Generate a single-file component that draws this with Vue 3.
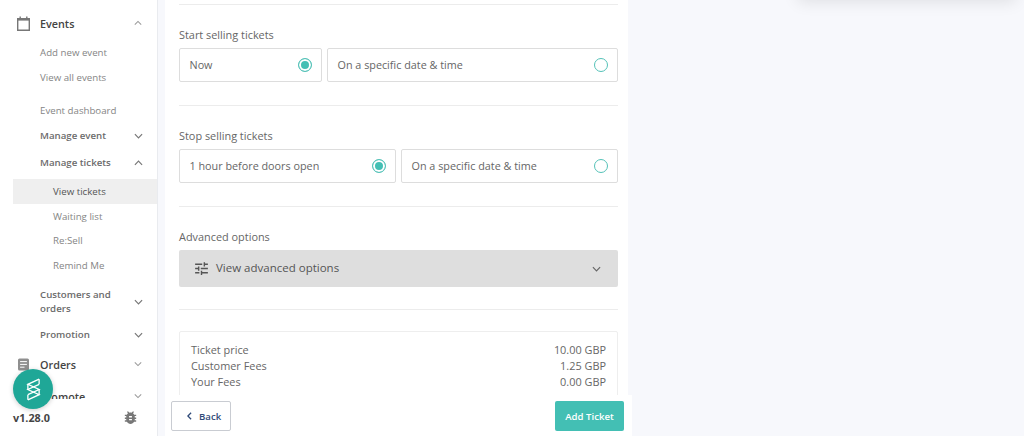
<script setup>
const subGroups = [
  { cls: 'r-sub', label: 'Add new event' },
  { cls: 'r-sub', label: 'View all events' },
  { cls: 'r-plain gap8', label: 'Event dashboard' }
]
const tickets = [
  { label: 'View tickets', active: true },
  { label: 'Waiting list' },
  { label: 'Re:Sell' },
  { label: 'Remind Me' }
]
const rows = [
  { label: 'Ticket price', value: '10.00 GBP' },
  { label: 'Customer Fees', value: '1.25 GBP' },
  { label: 'Your Fees', value: '0.00 GBP' }
]
</script>

<template>
  <div class="page">
    <aside class="sidebar">
      <nav class="nav">
        <div class="head events">
          <svg class="ico" viewBox="0 0 13 15" width="13" height="15"><path d="M0.7 2.7h11.6v11.6H0.7z" fill="none" stroke="#777" stroke-width="1.4"/><path d="M0.7 3.6h11.6" stroke="#777" stroke-width="2"/><path d="M3.2 0.5v2.4M9.8 0.5v2.4" stroke="#777" stroke-width="1.4"/></svg>
          <span class="grow">Events</span>
          <svg class="chev light" viewBox="0 0 10 6"><path d="M1 5l4-4 4 4" /></svg>
        </div>
        <div v-for="s in subGroups" :key="s.label" :class="s.cls">{{ s.label }}</div>
        <div class="group">
          <span class="grow">Manage event</span>
          <svg class="chev" viewBox="0 0 10 6"><path d="M1 1l4 4 4-4" /></svg>
        </div>
        <div class="group g2">
          <span class="grow">Manage tickets</span>
          <svg class="chev" viewBox="0 0 10 6"><path d="M1 5l4-4 4 4" /></svg>
        </div>
        <div class="tickets">
          <div v-for="t in tickets" :key="t.label" class="ticket" :class="{ active: t.active }">{{ t.label }}</div>
        </div>
        <div class="group two">
          <span class="grow">Customers and orders</span>
          <svg class="chev" viewBox="0 0 10 6"><path d="M1 1l4 4 4-4" /></svg>
        </div>
        <div class="group promo">
          <span class="grow">Promotion</span>
          <svg class="chev" viewBox="0 0 10 6"><path d="M1 1l4 4 4-4" /></svg>
        </div>
        <div class="head orders">
          <svg class="ico" viewBox="0 0 12 13" width="12" height="13"><rect x="0.5" y="0.5" width="11" height="12" rx="1.5" fill="#8f8f8f"/><path d="M2.6 3.6h6.8M2.6 6.4h6.8M2.6 9.2h4.4" stroke="#fff" stroke-width="1"/></svg>
          <span class="grow">Orders</span>
          <svg class="chev light" viewBox="0 0 10 6"><path d="M1 1l4 4 4-4" /></svg>
        </div>
        <div class="head promote">
          <span class="ico"></span>
          <span class="grow">Promote</span>
          <svg class="chev light" viewBox="0 0 10 6"><path d="M1 1l4 4 4-4" /></svg>
        </div>
      </nav>
      <footer class="foot">
        <span class="version">v1.28.0</span>
        <svg viewBox="0 0 24 24" width="17" height="17"><path fill="#777" d="M20 8h-2.81c-.45-.78-1.07-1.45-1.82-1.96L17 4.41 15.59 3l-2.17 2.17C12.96 5.06 12.49 5 12 5c-.49 0-.96.06-1.41.17L8.41 3 7 4.41l1.62 1.63C7.88 6.55 7.26 7.22 6.81 8H4v2h2.09c-.05.33-.09.66-.09 1v1H4v2h2v1c0 .34.04.67.09 1H4v2h2.81c1.04 1.79 2.97 3 5.19 3s4.15-1.21 5.19-3H20v-2h-2.09c.05-.33.09-.66.09-1v-1h2v-2h-2v-1c0-.34-.04-.67-.09-1H20V8zm-6 8h-4v-2h4v2zm0-4h-4v-2h4v2z"/></svg>
      </footer>
      <div class="fab">
        <svg viewBox="0 0 16 24" width="15" height="23" fill="none" stroke="#fff" stroke-width="1.4" stroke-linejoin="miter"><path d="M14 1L2 6.5 14 12 2 17.5" /><path d="M14 6.5L2 12l12 5.5L2 23" /><path d="M14 1v5.5M2 6.5V12M14 12v5.5M2 17.5V23" /></svg>
      </div>
    </aside>

    <main class="main">
      <div class="popup"></div>
      <section class="panel">
        <div class="form">
          <hr class="line" />
          <div class="label">Start selling tickets</div>
          <div class="choices start">
            <div class="choice"><span>Now</span><span class="radio on"></span></div>
            <div class="choice"><span>On a specific date &amp; time</span><span class="radio"></span></div>
          </div>
          <hr class="line" />
          <div class="label">Stop selling tickets</div>
          <div class="choices stop">
            <div class="choice"><span>1 hour before doors open</span><span class="radio on"></span></div>
            <div class="choice"><span>On a specific date &amp; time</span><span class="radio"></span></div>
          </div>
          <hr class="line" />
          <div class="label">Advanced options</div>
          <div class="advanced">
            <svg viewBox="0 0 24 24" width="17" height="17"><path fill="#555" d="M3 17v2h6v-2H3zM3 5v2h10V5H3zm10 16v-2h8v-2h-8v-2h-2v6h2zM7 9v2H3v2h4v2h2V9H7zm14 4v-2H11v2h10zm-6-4h2V7h4V5h-4V3h-2v6z"/></svg>
            <span class="grow">View advanced options</span>
            <svg class="chev adv" viewBox="0 0 10 6"><path d="M1 1l4 4 4-4" /></svg>
          </div>
          <hr class="line" />
          <div class="summary">
            <div v-for="r in rows" :key="r.label" class="row"><span>{{ r.label }}</span><span>{{ r.value }}</span></div>
          </div>
        </div>
        <div class="actions">
          <button class="back" type="button">
            <svg viewBox="0 0 6 10" width="5" height="8"><path d="M5 1L1 5l4 4" fill="none" stroke="#2f4a78" stroke-width="1.6"/></svg>
            <span>Back</span>
          </button>
          <button class="add" type="button">Add Ticket</button>
        </div>
      </section>
    </main>
  </div>
</template>

<style>
html, body { margin: 0; background: #f7f8fc; }
</style>

<style scoped>
.page {
  display: flex;
  width: 1024px;
  height: 436px;
  overflow: hidden;
  font-family: "Open Sans", "Liberation Sans", sans-serif;
  color: #666;
  background: #f7f8fc;
}
.sidebar {
  position: relative;
  flex: 0 0 158px;
  box-sizing: border-box;
  display: flex;
  flex-direction: column;
  background: #fff;
  border-right: 1px solid #e9ebef;
}
.nav {
  height: 399px;
  flex: 0 0 399px;
  overflow: hidden;
  box-sizing: border-box;
  padding-top: 11px;
}
.grow { flex: 1; }
.head, .group {
  display: flex;
  align-items: center;
  padding-right: 14px;
}
.head {
  height: 24px;
  padding-left: 17px;
  font-size: 10.8px;
  font-weight: 600;
  color: #444;
}
.ico { flex: 0 0 13px; margin-right: 10px; }
.events { margin-bottom: 5px; }
.events .ico { margin-top: 1px; }
.r-sub, .r-plain {
  height: 25px;
  line-height: 25px;
  padding-left: 40px;
  font-size: 9.7px;
  color: #858585;
}
.gap8 { margin-top: 8px; }
.group {
  height: 25px;
  padding-left: 40px;
  font-size: 9.7px;
  font-weight: 600;
  color: #6b6b6b;
  line-height: 14px;
}
.g2 { margin-top: 2px; }
.tickets { margin-top: 4px; }
.ticket {
  height: 24.7px;
  line-height: 25.5px;
  margin-left: 13px;
  padding-left: 40px;
  font-size: 9.7px;
  color: #858585;
}
.ticket.active { background: #efefef; color: #555; line-height: 25px; }
.two { height: 28px; margin-top: 10.5px; }
.two .grow { box-sizing: border-box; padding-right: 18px; }
.promo { margin-top: 6px; }
.orders { margin-top: 5px; }
.promote { margin-top: 8px; }
.chev {
  flex: 0 0 9px;
  width: 9px;
  height: 6px;
  fill: none;
  stroke: #777;
  stroke-width: 1.3;
}
.chev.light { stroke: #9a9a9a; width: 8px; flex-basis: 8px; margin-right: 1px; }
.foot {
  flex: 1;
  display: flex;
  align-items: center;
  justify-content: space-between;
  padding: 0 18px 1px 13px;
  background: #fff;
}
.version { font-size: 10.8px; font-weight: 700; color: #444; }
.fab {
  position: absolute;
  left: 13px;
  top: 369px;
  width: 40px;
  height: 40px;
  border-radius: 50%;
  background: #1fa797;
  display: flex;
  align-items: center;
  justify-content: center;
  box-shadow: 0 1px 5px rgba(0, 0, 0, .2);
}
.main {
  position: relative;
  flex: 1;
  padding-left: 7px;
}
.popup {
  position: absolute;
  top: -40px;
  left: 640px;
  width: 218px;
  height: 40px;
  background: #fff;
  box-shadow: 0 2px 16px rgba(0, 0, 0, .1);
}
.panel {
  position: relative;
  box-sizing: border-box;
  width: 463px;
  height: 436px;
  background: #fff;
}
.form {
  height: 395px;
  overflow: hidden;
  box-sizing: border-box;
  padding: 4px 10px 0 14px;
}
.line {
  margin: 0 0 21px;
  border: 0;
  border-top: 1px solid #ececec;
}
.label {
  font-size: 10.9px;
  line-height: 18px;
  color: #666;
  margin-bottom: 4px;
}
.choices {
  display: flex;
  gap: 5px;
  margin-bottom: 23px;
}
.choice {
  box-sizing: border-box;
  height: 34px;
  display: flex;
  align-items: center;
  justify-content: space-between;
  padding: 0 9px 2px 9.5px;
  font-size: 10.8px;
  color: #666;
  border: 1px solid #ddd;
  border-radius: 2px;
}
.start .choice:first-child { flex: 0 0 143px; }
.start .choice:last-child { flex: 1; }
.stop .choice:first-child { flex: 0 0 217px; }
.stop .choice:last-child { flex: 1; }
.radio {
  box-sizing: border-box;
  width: 14px;
  height: 14px;
  border-radius: 50%;
  border: 1.5px solid #55c2b8;
  background: #fff;
  margin-top: 1px;
}
.radio.on {
  background: #43bfb4;
  box-shadow: inset 0 0 0 2px #fff;
}
.advanced {
  box-sizing: border-box;
  height: 37px;
  display: flex;
  align-items: center;
  gap: 6px;
  padding: 0 17px 2px 14px;
  font-size: 11.5px;
  color: #555;
  background: #dedede;
  border-radius: 2px;
  margin-bottom: 22px;
}
.advanced svg { margin-top: 2px; }
.chev.adv { stroke: #666; }
.summary {
  box-sizing: border-box;
  height: 80px;
  padding: 10px 11px 0;
  border: 1px solid #eee;
  border-radius: 2px;
}
.row {
  display: flex;
  justify-content: space-between;
  height: 16px;
  line-height: 16px;
  font-size: 10.9px;
  color: #666;
}
.actions {
  position: absolute;
  left: 0;
  right: -4px;
  bottom: 0;
  height: 41px;
  display: flex;
  align-items: flex-start;
  justify-content: space-between;
  box-sizing: border-box;
  padding: 6px 8px 0 6px;
  background: #fff;
}
.back, .add {
  box-sizing: border-box;
  height: 30px;
  font-family: inherit;
  font-size: 9.6px;
  font-weight: 600;
  border-radius: 2px;
}
.back {
  width: 60px;
  display: flex;
  align-items: center;
  gap: 7px;
  padding: 0 0 0 15px;
  color: #2f4a78;
  background: #fff;
  border: 1px solid #c9ccd2;
}
.add {
  width: 69px;
  color: #fff;
  background: #43bfb4;
  border: 0;
}
</style>
